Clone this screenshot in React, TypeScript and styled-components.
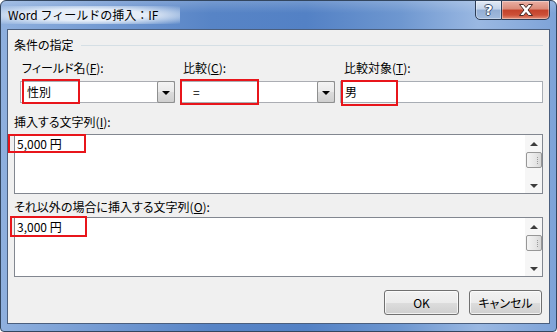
import styled, { createGlobalStyle } from "styled-components";

const GlobalStyle = createGlobalStyle`
  html, body { margin: 0; padding: 0; background: #ffffff; }
  body {
    font-family: "Noto Sans CJK JP", "Noto Sans", sans-serif;
    font-size: 12px;
    color: #000;
  }
  * { box-sizing: border-box; }
`;

const Window = styled.div`
  position: relative;
  width: 557px;
  height: 332px;
  border: 1px solid #33465f;
  border-radius: 6px 6px 4px 4px;
  padding: 0 6px 7px 6px;
  display: flex;
  flex-direction: column;
  overflow: hidden;
  background:
    linear-gradient(180deg, rgba(255,255,255,0.18) 0px, rgba(255,255,255,0) 12px),
    linear-gradient(90deg, #8fb0de 0%, #7198d1 20%, #5784c6 38%, #5381c5 55%, #6e97d0 72%, #9ab8e2 86%, #7ea3d8 100%);
`;

const TitleBar = styled.div`
  height: 28px;
  display: flex;
  align-items: flex-start;
  justify-content: space-between;
`;

const Title = styled.div`
  margin: 5px 0 0 -12px;
  padding: 0 22px 0 13px;
  height: 18px;
  line-height: 18px;
  font-size: 12px;
  white-space: nowrap;
  background: radial-gradient(ellipse at center, rgba(236,242,250,0.95) 45%, rgba(220,232,246,0.6) 70%, rgba(200,218,240,0) 100%);
`;

const CaptionButtons = styled.div`
  display: flex;
  margin-top: -1px;
`;

const CaptionButton = styled.div<{ $close?: boolean }>`
  width: ${(p) => (p.$close ? "48px" : "27px")};
  height: 20px;
  border: 1px solid #2c3c55;
  border-left-width: ${(p) => (p.$close ? "0" : "1px")};
  border-radius: ${(p) => (p.$close ? "0 0 5px 0" : "0 0 0 5px")};
  display: flex;
  align-items: center;
  justify-content: center;
  box-shadow: inset 0 0 0 1px rgba(255,255,255,0.35);
  background: ${(p) =>
    p.$close
      ? "linear-gradient(180deg, #eab0a5 0%, #da8a78 45%, #c4422b 50%, #cc5038 78%, #e2907a 100%)"
      : "linear-gradient(180deg, #e2eaf5 0%, #c3d3ea 45%, #93aed4 50%, #a2bbde 100%)"};
`;

const HelpGlyph = styled.span`
  font-family: "DejaVu Sans", sans-serif;
  font-weight: bold;
  font-size: 14px;
  line-height: 14px;
  color: #fff;
  text-shadow: 1px 0 0 #3a4d6a, -1px 0 0 #3a4d6a, 0 1px 0 #3a4d6a, 0 -1px 0 #3a4d6a;
`;

const Client = styled.div`
  flex: 1;
  background: #f0f0f0;
  border: 1px solid #4b5f7e;
  padding: 7px 6px 0 6px;
  display: flex;
  flex-direction: column;
  font-feature-settings: "palt";
`;

const GroupHeader = styled.div`
  height: 16px;
  display: flex;
  align-items: center;
  gap: 7px;
  line-height: 16px;
  &::after {
    content: "";
    flex: 1;
    height: 1px;
    background: #d5dfe5;
    margin-top: 1px;
  }
`;

const ConditionRow = styled.div`
  margin: 7px 0 0 6px;
  display: flex;
  gap: 5px;
`;

const Field = styled.div<{ $grow?: boolean }>`
  display: flex;
  flex-direction: column;
  width: ${(p) => (p.$grow ? "auto" : "155px")};
  flex: ${(p) => (p.$grow ? "1" : "none")};
`;

const Label = styled.div<{ $indent?: number }>`
  height: 16px;
  line-height: 16px;
  padding-left: ${(p) => p.$indent ?? 0}px;
  white-space: nowrap;
`;

const FieldLabel = styled(Label)`
  margin-bottom: 5px;
`;

const Combo = styled.div`
  position: relative;
  height: 22px;
  background: #fff;
  border: 1px solid #abadb3;
  display: flex;
  align-items: center;
  justify-content: space-between;
`;

const InputText = styled.span<{ $pad: number }>`
  padding-left: ${(p) => p.$pad}px;
  line-height: 16px;
`;

const DropButton = styled.div`
  width: 18px;
  height: 22px;
  margin: -1px -1px -1px 0;
  border: 1px solid #8e8f8f;
  border-radius: 2px;
  background: linear-gradient(180deg, #f4f4f4 0%, #e9e9e9 50%, #dcdcdc 51%, #cfcfcf 100%);
  display: flex;
  align-items: center;
  justify-content: center;
  &::after {
    content: "";
    border-left: 4px solid transparent;
    border-right: 4px solid transparent;
    border-top: 4px solid #000;
    margin-top: 1px;
  }
`;

const TextBox = styled(Combo)`
  justify-content: flex-start;
  border-color: #a8adb4;
`;

const Highlight = styled.div<{ $l: number; $t: number; $w: number; $h: number }>`
  position: absolute;
  left: ${(p) => p.$l}px;
  top: ${(p) => p.$t}px;
  width: ${(p) => p.$w}px;
  height: ${(p) => p.$h}px;
  border: 2px solid #e8151b;
  pointer-events: none;
`;

const AreaLabel = styled(Label)<{ $top: number; $bottom: number }>`
  margin-top: ${(p) => p.$top}px;
  margin-bottom: ${(p) => p.$bottom}px;
`;

const TextArea = styled.div`
  position: relative;
  height: 60px;
  background: #fff;
  border: 1px solid #828790;
  display: flex;
`;

const AreaText = styled.div`
  flex: 1;
  padding: 1px 0 0 2px;
  line-height: 16px;
`;

const ScrollBar = styled.div`
  width: 17px;
  background: #f6f6f6;
  display: flex;
  flex-direction: column;
  align-items: center;
  padding-top: 7px;
`;

const ArrowUp = styled.div`
  border-left: 4px solid transparent;
  border-right: 4px solid transparent;
  border-bottom: 4px solid #3c3c3c;
`;

const ArrowDown = styled.div`
  margin-top: auto;
  margin-bottom: 5px;
  border-left: 4px solid transparent;
  border-right: 4px solid transparent;
  border-top: 4px solid #3c3c3c;
`;

const Thumb = styled.div`
  margin-top: 6px;
  width: 16px;
  height: 16px;
  border: 1px solid #979797;
  border-radius: 2px;
  background: linear-gradient(90deg, #f4f4f4 0%, #e6e6e6 60%, #d8d8d8 100%);
  position: relative;
  &::after {
    content: "";
    position: absolute;
    right: 3px;
    top: 4px;
    width: 1px;
    height: 7px;
    background: repeating-linear-gradient(180deg, #9a9a9a 0 1px, transparent 1px 2px);
  }
`;

const ButtonRow = styled.div`
  margin-top: 13px;
  padding-right: 1px;
  display: flex;
  justify-content: flex-end;
  gap: 10px;
`;

const DialogButton = styled.button<{ $w: number }>`
  width: ${(p) => p.$w}px;
  height: 25px;
  padding: 0;
  border: 1px solid #707070;
  border-radius: 3px;
  font-family: inherit;
  font-feature-settings: inherit;
  font-size: 12px;
  color: #000;
  box-shadow: inset 0 0 0 1px rgba(255,255,255,0.7);
  background: linear-gradient(180deg, #f2f2f2 0%, #ebebeb 50%, #dddddd 51%, #cfcfcf 100%);
`;

const Scroll = () => (
  <ScrollBar>
    <ArrowUp />
    <Thumb />
    <ArrowDown />
  </ScrollBar>
);

export default function App() {
  return (
    <>
      <GlobalStyle />
      <Window>
        <TitleBar>
          <Title>Word フィールドの挿入：IF</Title>
          <CaptionButtons>
            <CaptionButton>
              <HelpGlyph>?</HelpGlyph>
            </CaptionButton>
            <CaptionButton $close>
              <svg width="16" height="12" viewBox="0 0 16 12">
                <path
                  d="M1.5 0.5 H5.5 L8 3.5 L10.5 0.5 H14.5 L10 6 L14.5 11.5 H10.5 L8 8.5 L5.5 11.5 H1.5 L6 6 Z"
                  fill="#fff"
                  stroke="#4a2a26"
                  strokeWidth="1"
                  strokeLinejoin="round"
                />
              </svg>
            </CaptionButton>
          </CaptionButtons>
        </TitleBar>
        <Client>
          <GroupHeader>条件の指定</GroupHeader>
          <ConditionRow>
            <Field>
              <FieldLabel $indent={2}>
                フィールド名(<u>F</u>):
              </FieldLabel>
              <Combo>
                <InputText $pad={6}>性別</InputText>
                <DropButton />
                <Highlight $l={1} $t={-3} $w={58} $h={25} />
              </Combo>
            </Field>
            <Field>
              <FieldLabel $indent={3}>
                比較(<u>C</u>):
              </FieldLabel>
              <Combo>
                <InputText $pad={12}>=</InputText>
                <DropButton />
                <Highlight $l={-1} $t={-3} $w={79} $h={26} />
              </Combo>
            </Field>
            <Field $grow>
              <FieldLabel $indent={4}>
                比較対象(<u>T</u>):
              </FieldLabel>
              <TextBox>
                <InputText $pad={4}>男</InputText>
                <Highlight $l={0} $t={-2} $w={57} $h={26} />
              </TextBox>
            </Field>
          </ConditionRow>
          <AreaLabel $top={11} $bottom={4}>
            挿入する文字列(<u>I</u>):
          </AreaLabel>
          <TextArea>
            <AreaText>5,000 円</AreaText>
            <Scroll />
            <Highlight $l={-7} $t={-1} $w={78} $h={19} />
          </TextArea>
          <AreaLabel $top={5} $bottom={2}>
            それ以外の場合に挿入する文字列(<u>O</u>):
          </AreaLabel>
          <TextArea>
            <AreaText>3,000 円</AreaText>
            <Scroll />
            <Highlight $l={-5} $t={-2} $w={77} $h={21} />
          </TextArea>
          <ButtonRow>
            <DialogButton $w={75}>OK</DialogButton>
            <DialogButton $w={73}>キャンセル</DialogButton>
          </ButtonRow>
        </Client>
      </Window>
    </>
  );
}
